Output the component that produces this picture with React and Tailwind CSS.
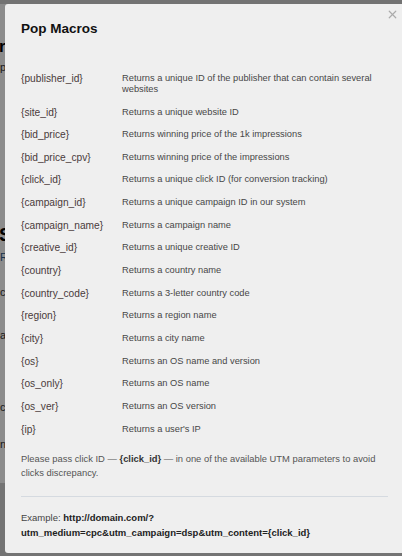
import { X } from 'lucide-react';

const macros = [
  ['{publisher_id}', 'Returns a unique ID of the publisher that can contain several websites'],
  ['{site_id}', 'Returns a unique website ID'],
  ['{bid_price}', 'Returns winning price of the 1k impressions'],
  ['{bid_price_cpv}', 'Returns winning price of the impressions'],
  ['{click_id}', 'Returns a unique click ID (for conversion tracking)'],
  ['{campaign_id}', 'Returns a unique campaign ID in our system'],
  ['{campaign_name}', 'Returns a campaign name'],
  ['{creative_id}', 'Returns a unique creative ID'],
  ['{country}', 'Returns a country name'],
  ['{country_code}', 'Returns a 3-letter country code'],
  ['{region}', 'Returns a region name'],
  ['{city}', 'Returns a city name'],
  ['{os}', 'Returns an OS name and version'],
  ['{os_only}', 'Returns an OS name'],
  ['{os_ver}', 'Returns an OS version'],
  ['{ip}', "Returns a user's IP"]
];

function BackgroundPage() {
  return (
    <div className="flex h-full w-full flex-col bg-white">
      <div className="h-[4px] bg-[#d2d2d2]" />
      <div className="-ml-[1px] mt-[34.5px] h-[16px] text-[17px] font-bold leading-[16px] text-black">rates</div>
      <div className="mt-[6.5px] h-[12px] text-[11px] leading-[12px] text-[#333]">publishers</div>
      <div className="-ml-[1px] mt-[152px] h-[20px] text-[19px] font-bold leading-[20px] text-black">Stats</div>
      <div className="mt-[6px] h-[12px] text-[11px] leading-[12px] text-[#2a5a8c]">Read more</div>
      <div className="mt-[23px] h-[12px] text-[11px] leading-[12px] text-[#333]">cost</div>
      <div className="mt-[31px] h-[12px] text-[11px] leading-[12px] text-[#333]">all</div>
      <div className="mt-[60px] h-[12px] text-[11px] leading-[12px] text-[#333]">ce</div>
      <div className="mt-[25px] h-[12px] text-[11px] leading-[12px] text-[#333]">n</div>
      <div className="mt-[33px] flex-1 bg-[#d4d4d4]" />
    </div>
  );
}

export default function App() {
  return (
    <div className="relative h-[556px] w-[402px] overflow-hidden font-['Liberation_Sans',Arial,sans-serif]">
      <BackgroundPage />
      <div className="absolute inset-0 bg-black/45" />

      <div className="absolute left-[5px] top-[4px] h-[549px] w-[399px] rounded-[3px] bg-[#efefef] px-4 pt-[17px]">
        <button className="absolute right-[5px] top-[4px] text-[#ababab]">
          <X size={13} strokeWidth={2.2} />
        </button>

        <h2 className="text-[13.5px] font-bold leading-[16px] text-[#111]">Pop Macros</h2>

        <div className="mt-[35.5px] grid grid-cols-[101px_1fr] gap-y-[10.65px]">
          {macros.map(([m, d]) => (
            <div key={m} className="contents">
              <div className="text-[10.2px] leading-[12px] text-[#4a3b3b]">{m}</div>
              <div className="text-[9.3px] leading-[11.7px] text-[#474747]">{d}</div>
            </div>
          ))}
        </div>

        <p className="mt-[16px] text-[9.4px] leading-[14.3px] text-[#555]">
          Please pass click ID — <b className="text-[#333]">{'{click_id}'}</b> — in one of the available UTM parameters to avoid clicks discrepancy.
        </p>

        <div className="mt-[15.5px] h-px bg-[#d5dae0]" />

        <p className="mt-[14.5px] text-[9.5px] leading-[14.4px] text-[#444]">
          Example: <b className="text-[#222]">http://domain.com/?utm_medium=cpc&amp;utm_campaign=dsp&amp;utm_content={'{click_id}'}</b>
        </p>
      </div>
    </div>
  );
}
